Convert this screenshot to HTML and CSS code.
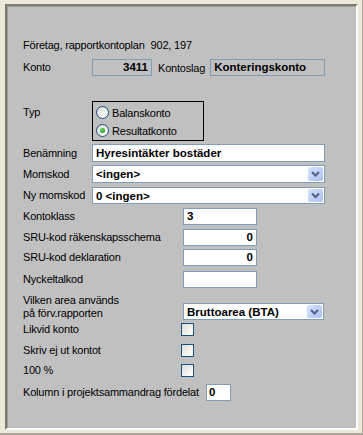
FILE: index.html
```html
<!DOCTYPE html>
<html lang="sv">
<head>
    <meta charset="UTF-8">
    <title>Konto</title>
    <link rel="stylesheet" href="styles.css">
</head>
<body>
    <div class="window">
        <div class="panel">
            <div class="row r-info">
                <span class="label-inline">Företag, rapportkontoplan</span>
                <span class="value-inline">902, 197</span>
            </div>

            <div class="row r-konto">
                <span class="label">Konto</span>
                <div class="box box-konto">3411</div>
                <span class="label-mid">Kontoslag</span>
                <div class="box box-slag">Konteringskonto</div>
            </div>

            <div class="row r-typ">
                <span class="label label-top">Typ</span>
                <div class="group">
                    <div class="radio-row"><span class="radio"></span>Balanskonto</div>
                    <div class="radio-row"><span class="radio checked"></span>Resultatkonto</div>
                </div>
            </div>

            <div class="row r-ben">
                <span class="label">Benämning</span>
                <div class="field field-wide tall">Hyresintäkter bostäder</div>
            </div>

            <div class="row r-moms">
                <span class="label">Momskod</span>
                <div class="select field-wide tall">
                    <span class="select-text">&lt;ingen&gt;</span>
                    <span class="drop-btn"><svg width="15" height="14" viewBox="0 0 15 14"><polyline points="4,5 7.5,8.5 11,5" fill="none" stroke="#4d6185" stroke-width="2"/></svg></span>
                </div>
            </div>

            <div class="row r-nymoms">
                <span class="label">Ny momskod</span>
                <div class="select field-wide">
                    <span class="select-text">0 &lt;ingen&gt;</span>
                    <span class="drop-btn"><svg width="15" height="13" viewBox="0 0 15 13"><polyline points="4,4.5 7.5,8 11,4.5" fill="none" stroke="#4d6185" stroke-width="2"/></svg></span>
                </div>
            </div>

            <div class="row r-klass">
                <span class="label label-long">Kontoklass</span>
                <div class="field field-short">3</div>
            </div>

            <div class="row r-sru1">
                <span class="label label-long">SRU-kod räkenskapsschema</span>
                <div class="field field-short num">0</div>
            </div>

            <div class="row r-sru2">
                <span class="label label-long">SRU-kod deklaration</span>
                <div class="field field-short num">0</div>
            </div>

            <div class="row r-nyckel">
                <span class="label label-long">Nyckeltalkod</span>
                <div class="field field-short"></div>
            </div>

            <div class="row r-area">
                <span class="label label-long two-line">Vilken area används<br>på förv.rapporten</span>
                <div class="select field-area">
                    <span class="select-text">Bruttoarea (BTA)</span>
                    <span class="drop-btn"><svg width="15" height="12" viewBox="0 0 15 12"><polyline points="4,4 7.5,7.5 11,4" fill="none" stroke="#4d6185" stroke-width="2"/></svg></span>
                </div>
            </div>

            <div class="row r-likvid">
                <span class="label label-check">Likvid konto</span>
                <span class="check"></span>
            </div>

            <div class="row r-skriv">
                <span class="label label-check">Skriv ej ut kontot</span>
                <span class="check"></span>
            </div>

            <div class="row r-procent">
                <span class="label label-check">100 %</span>
                <span class="check"></span>
            </div>

            <div class="row r-kolumn">
                <span class="label label-kolumn">Kolumn i projektsammandrag fördelat</span>
                <div class="field field-tiny">0</div>
            </div>
        </div>
    </div>
</body>
</html>
```

FILE: styles.css
```css
body {
    margin: 0;
    padding: 0;
    background: #ece9d8;
    font-family: "Liberation Sans", Arial, sans-serif;
    font-size: 11px;
    letter-spacing: -0.2px;
    color: #000;
}
.window {
    width: 363px;
    height: 435px;
    box-sizing: border-box;
    padding: 4px 4px 2px 5px;
    border-right: 1px solid #aca899;
    border-bottom: 2px solid #aca899;
}
.panel {
    height: 426px;
    box-sizing: border-box;
    background: #c0c0c0;
    border-style: solid;
    border-width: 2px 2px 2px 2px;
    border-color: #7d7c73 #ffffff #ffffff #7d7c73;
    box-shadow: inset 1px 1px 0 #9e9d93;
    padding: 0 0 0 16px;
    display: flex;
    flex-direction: column;
}
.row {
    display: flex;
    align-items: center;
}

/* vertical rhythm of the form */
.r-info    { margin-top: 31px; height: 15px; }
.r-konto   { margin-top: 7px; height: 17px; }
.r-typ     { margin-top: 25px; align-items: flex-start; }
.r-ben     { margin-top: 3px; }
.r-moms    { margin-top: 3px; }
.r-nymoms  { margin-top: 4px; }
.r-klass   { margin-top: 4px; }
.r-sru1    { margin-top: 4px; }
.r-sru2    { margin-top: 3px; }
.r-nyckel  { margin-top: 5px; }
.r-area    { margin-top: 6px; align-items: flex-end; }
.r-likvid  { margin-top: 3px; }
.r-skriv   { margin-top: 8px; }
.r-procent { margin-top: 7px; }
.r-kolumn  { margin-top: 7px; }

.label {
    width: 69px;
    flex-shrink: 0;
    line-height: 13px;
}
.label-long { width: 160px; }
.label-check { width: 158px; }
.label-kolumn { width: 178px; }
.label-top { padding-top: 5px; }
.two-line { line-height: 13px; }
.label-inline { margin-right: 6px; }
.label-mid { margin: 0 5px 0 6px; }

.box {
    box-sizing: border-box;
    height: 17px;
    border: 1px solid #7f9db9;
    background: #c0c0c0;
    font-weight: bold;
    font-size: 11.5px;
    letter-spacing: 0;
    line-height: 15px;
    padding: 0 3px;
}
.box-konto { width: 60px; text-align: right; }
.box-slag { width: 115px; }

.group {
    box-sizing: border-box;
    width: 112px;
    height: 40px;
    border: 1px solid #000;
    padding: 4px 0 0 3px;
}
.radio-row {
    display: flex;
    align-items: center;
    height: 13px;
    margin-bottom: 5px;
}
.radio {
    box-sizing: border-box;
    width: 13px;
    height: 13px;
    border-radius: 50%;
    border: 1px solid #1c5180;
    background: radial-gradient(circle at 70% 70%, #ffffff 0%, #e4e4de 60%, #d2d2cb 100%);
    margin-right: 3px;
    display: flex;
    align-items: center;
    justify-content: center;
}
.radio.checked::after {
    content: "";
    width: 5px;
    height: 5px;
    border-radius: 50%;
    background: radial-gradient(circle at 40% 40%, #6fd36f 0%, #21a121 70%, #1a8a1a 100%);
}

.field {
    box-sizing: border-box;
    height: 17px;
    border: 1px solid #7f9db9;
    background: #fff;
    font-weight: bold;
    font-size: 11.5px;
    letter-spacing: 0;
    line-height: 15px;
    padding: 0 3px;
}
.field.tall { height: 18px; line-height: 16px; }
.field-wide { width: 233px; }
.field-short { width: 74px; }
.field-tiny { width: 25px; margin-left: 5px; padding: 0 2px; }
.field-area { width: 141px; }
.num { text-align: right; }

.select {
    box-sizing: border-box;
    height: 17px;
    border: 1px solid #7f9db9;
    background: #fff;
    display: flex;
    align-items: center;
    padding: 1px;
    font-weight: bold;
    font-size: 11.5px;
    letter-spacing: 0;
}
.select.tall { height: 18px; }
.select-text {
    flex: 1;
    padding-left: 2px;
}
.drop-btn {
    align-self: stretch;
    width: 15px;
    border-radius: 2px;
    background: linear-gradient(135deg, #d8e3fc 0%, #bccdf6 60%, #adc1f1 100%);
    display: flex;
    align-items: center;
    justify-content: center;
}
.drop-btn svg { display: block; }

.check {
    box-sizing: border-box;
    width: 13px;
    height: 13px;
    border: 1px solid #1c5180;
    background: linear-gradient(135deg, #dcdcd7 0%, #f2f2ef 60%, #ffffff 100%);
}
.r-likvid .check,
.r-skriv .check,
.r-procent .check { margin-left: 0; }
```
